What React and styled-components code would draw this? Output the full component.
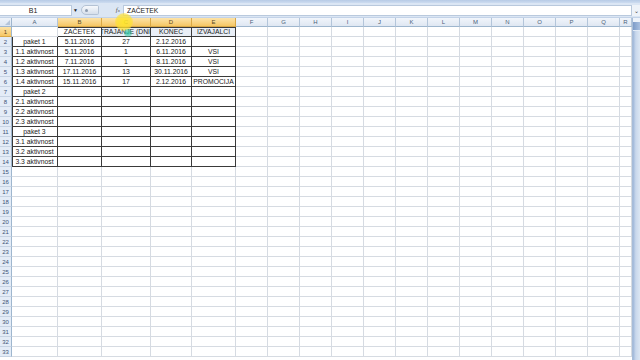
import React from "react";
import styled, { createGlobalStyle } from "styled-components";

const Global = createGlobalStyle`
  html, body { margin: 0; padding: 0; background: #fff; }
  body { font-family: "Liberation Sans", Arial, sans-serif; }
  #root { width: 640px; height: 360px; overflow: hidden; }
`;

const Page = styled.div`
  position: relative;
  width: 640px;
  height: 360px;
  display: flex;
  flex-direction: column;
  overflow: hidden;
  background: #fff;
`;

const RibbonEdge = styled.div`
  height: 3px;
  background: linear-gradient(#b7cbe6, #cddcf0);
  flex: none;
`;

const FormulaBar = styled.div`
  height: 15px;
  flex: none;
  display: flex;
  align-items: center;
  background: #dbe6f4;
  border-bottom: 1px solid #c3d3e8;
  box-sizing: border-box;
`;

const NameBox = styled.div`
  width: 72px;
  height: 11px;
  background: #fff;
  border: 1px solid #b9c9dd;
  border-left: none;
  box-sizing: border-box;
  display: flex;
  align-items: center;
  justify-content: center;
  font-size: 7px;
  color: #222;
  padding-right: 5px;
`;

const DropArrow = styled.div`
  width: 7px;
  display: flex;
  justify-content: center;
  font-size: 5px;
  color: #222;
`;

const Handle = styled.div`
  width: 18px;
  height: 10px;
  margin-left: 2px;
  border-radius: 6px 2px 2px 6px;
  background: linear-gradient(#f7f9fc, #d6dfeb);
  border: 1px solid #b4c2d4;
  box-sizing: border-box;
  display: flex;
  align-items: center;
  padding-left: 3px;
`;

const HandleDot = styled.div`
  width: 3px;
  height: 3px;
  border-radius: 50%;
  background: #8d9bb0;
`;

const FxBox = styled.div`
  width: 21px;
  display: flex;
  justify-content: flex-end;
  align-items: baseline;
  padding-right: 3px;
  font-family: "Liberation Serif", serif;
  font-style: italic;
  font-size: 7px;
  color: #555;
`;

const FxSub = styled.span`
  font-size: 5px;
`;

const FormulaInput = styled.div`
  flex: 1;
  height: 11px;
  background: #fff;
  border: 1px solid #b9c9dd;
  box-sizing: border-box;
  display: flex;
  align-items: center;
  padding-left: 3px;
  font-size: 6.8px;
  color: #222;
`;

const Expand = styled.div`
  width: 8px;
  height: 11px;
  display: flex;
  align-items: center;
  justify-content: center;
  font-size: 6px;
  color: #444;
  background: #eef3f9;
`;

const SheetArea = styled.div`
  flex: 1;
  display: flex;
  min-height: 0;
`;

const Grid = styled.div`
  flex: 1;
  display: grid;
  grid-template-columns: 12px 46px 44px 49px 41px 44px repeat(12, 32px) 12px;
  grid-template-rows: 9px;
  grid-auto-rows: 10px;
  overflow: hidden;
  font-size: 6.8px;
  color: #1b1b1b;
`;

const Corner = styled.div`
  position: relative;
  background: linear-gradient(#eef3fa, #dde6f2);
  border-right: 1px solid #9eb6ce;
  border-bottom: 1px solid #9eb6ce;
  box-sizing: border-box;
  &::after {
    content: "";
    position: absolute;
    right: 1px;
    bottom: 1px;
    border-left: 5px solid transparent;
    border-bottom: 5px solid #b5c5da;
  }
`;

const ColHead = styled.div`
  background: ${(p) =>
    p.$sel
      ? "linear-gradient(#fde3a8, #f6c765)"
      : "linear-gradient(#f1f5fb, #dfe7f2)"};
  border-right: 1px solid ${(p) => (p.$sel ? "#d9a845" : "#b3c5da")};
  border-bottom: 1px solid ${(p) => (p.$sel ? "#d9a845" : "#9eb6ce")};
  box-sizing: border-box;
  display: flex;
  align-items: center;
  justify-content: center;
  font-size: 6px;
  color: ${(p) => (p.$sel ? "#5d4a22" : "#4d5f78")};
  overflow: hidden;
`;

const RowHead = styled.div`
  background: ${(p) =>
    p.$sel ? "linear-gradient(#fde3a8, #f6c765)" : "#e4ecf7"};
  border-right: 1px solid #9eb6ce;
  border-bottom: 1px solid ${(p) => (p.$sel ? "#d9a845" : "#c6d3e3")};
  box-sizing: border-box;
  display: flex;
  align-items: center;
  justify-content: center;
  font-size: 6px;
  color: ${(p) => (p.$sel ? "#5d4a22" : "#3d5276")};
`;

const Cell = styled.div`
  box-sizing: border-box;
  border-right: 1px solid ${(p) => (p.$b ? "#3a3a3a" : "#d6dbe2")};
  border-bottom: 1px solid ${(p) => (p.$b ? "#3a3a3a" : "#d6dbe2")};
  box-shadow: ${(p) =>
    [p.$bl ? "inset 1px 0 0 #3a3a3a" : null, p.$bt ? "inset 0 1px 0 #3a3a3a" : null]
      .filter(Boolean)
      .join(", ") || "none"};
  background: ${(p) => p.$bg || "#fff"};
  display: flex;
  align-items: center;
  justify-content: center;
  white-space: nowrap;
  overflow: hidden;
  line-height: 10px;
`;

const CellText = styled.span`
  flex: none;
`;

const Scrollbar = styled.div`
  width: 8px;
  flex: none;
  display: flex;
  flex-direction: column;
  background: #e3ebf6;
  border-left: 1px solid #a7bcd8;
  box-sizing: border-box;
`;

const ScrollTop = styled.div`
  height: 4px;
  background: #eef3fa;
`;

const ScrollButton = styled.div`
  height: 8px;
  background: linear-gradient(90deg, #7e9cc8, #a9c0e0);
`;

const ScrollThumb = styled.div`
  flex: 1;
  margin-top: 1px;
  background: linear-gradient(90deg, #9fb7d9 0, #c9d8ec 40%, #dbe6f3 100%);
`;

const CursorGlow = styled.div`
  position: absolute;
  left: ${(p) => p.$x - p.$r}px;
  top: ${(p) => p.$y - p.$r}px;
  width: ${(p) => p.$r * 2}px;
  height: ${(p) => p.$r * 2}px;
  border-radius: 50%;
  background: ${(p) => p.$color};
  pointer-events: none;
`;

const COLS = ["A", "B", "C", "D", "E", "F", "G", "H", "I", "J", "K", "L", "M", "N", "O", "P", "Q", "R"];

const DATA = [
  ["", "ZAČETEK", "TRAJANJE (DNI)", "KONEC", "IZVAJALCI"],
  ["paket 1", "5.11.2016", "27", "2.12.2016", ""],
  ["1.1 aktivnost", "5.11.2016", "1", "6.11.2016", "VSI"],
  ["1.2 aktivnost", "7.11.2016", "1", "8.11.2016", "VSI"],
  ["1.3 aktivnost", "17.11.2016", "13", "30.11.2016", "VSI"],
  ["1.4 aktivnost", "15.11.2016", "17", "2.12.2016", "PROMOCIJA"],
  ["paket 2", "", "", "", ""],
  ["2.1 aktivnost", "", "", "", ""],
  ["2.2 aktivnost", "", "", "", ""],
  ["2.3 aktivnost", "", "", "", ""],
  ["paket 3", "", "", "", ""],
  ["3.1 aktivnost", "", "", "", ""],
  ["3.2 aktivnost", "", "", "", ""],
  ["3.3 aktivnost", "", "", "", ""],
];

const ROWS = 33;

function cellProps(r, c) {
  const inTable = c <= 4 && ((r >= 2 && r <= 14) || (r === 1 && c >= 1));
  return {
    $b: inTable,
    $bl: inTable && c === 0,
    $bt: r === 1 && c >= 1 && c <= 4,
    $bg: r === 1 && c >= 2 && c <= 4 ? "#e9eef6" : undefined,
  };
}

export default function App() {
  const cells = [];
  cells.push(<Corner key="corner" />);
  COLS.forEach((col, i) => {
    cells.push(
      <ColHead key={"h" + col} $sel={i >= 1 && i <= 4}>
        {col}
      </ColHead>
    );
  });
  for (let r = 1; r <= ROWS; r++) {
    cells.push(
      <RowHead key={"r" + r} $sel={r === 1}>
        {r}
      </RowHead>
    );
    COLS.forEach((col, c) => {
      const text = DATA[r - 1] && c <= 4 ? DATA[r - 1][c] : "";
      cells.push(
        <Cell key={col + r} {...cellProps(r, c)}>
          {text ? <CellText>{text}</CellText> : null}
        </Cell>
      );
    });
  }

  return (
    <Page>
      <Global />
      <RibbonEdge />
      <FormulaBar>
        <NameBox>B1</NameBox>
        <DropArrow>▼</DropArrow>
        <Handle>
          <HandleDot />
        </Handle>
        <FxBox>
          f<FxSub>x</FxSub>
        </FxBox>
        <FormulaInput>ZAČETEK</FormulaInput>
        <Expand>⌄</Expand>
      </FormulaBar>
      <SheetArea>
        <Grid>{cells}</Grid>
        <Scrollbar>
          <ScrollTop />
          <ScrollButton />
          <ScrollThumb />
        </Scrollbar>
      </SheetArea>
      <CursorGlow $x={124} $y={22} $r={9} $color="radial-gradient(circle, rgba(255,232,40,0.9) 0%, rgba(255,225,50,0.75) 55%, rgba(255,225,50,0) 100%)" />
      <CursorGlow $x={128} $y={33} $r={4} $color="radial-gradient(circle, rgba(40,200,170,0.85) 0%, rgba(60,200,160,0.5) 60%, rgba(60,200,160,0) 100%)" />
    </Page>
  );
}
